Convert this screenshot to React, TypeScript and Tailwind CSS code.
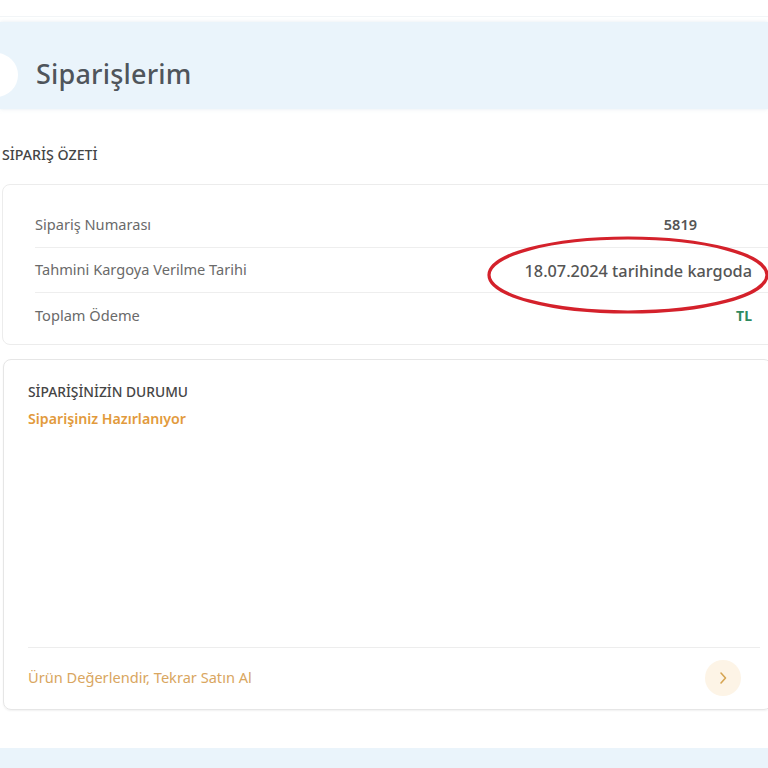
import React from "react";

const font = { fontFamily: '"Noto Sans", "Open Sans", Arial, sans-serif' };

function SummaryRow({
  label,
  value,
  valueClass,
  last,
}: {
  label: string;
  value: React.ReactNode;
  valueClass: string;
  last?: boolean;
}) {
  return (
    <div
      className={`flex h-[45px] items-center justify-between ${
        last ? "" : "border-b border-[#eeeeee]"
      }`}
    >
      <span className="text-[14.6px] text-[#6a6a6a]">{label}</span>
      <span className={valueClass}>{value}</span>
    </div>
  );
}

export default function App() {
  return (
    <div
      className="relative h-[768px] w-[768px] overflow-hidden bg-white"
      style={font}
    >
      {/* top hairline */}
      <div className="mt-[16px] h-px bg-[#f2f5f7]" />

      {/* page header */}
      <div className="mt-[5px] flex h-[87px] items-center bg-[#eaf4fb] pt-[18px] shadow-[0_0_4px_rgba(180,200,215,0.35)]">
        <div className="ml-[-26px] flex h-11 w-11 shrink-0 items-center justify-end rounded-full bg-white pr-[26px]">
          <svg width="8" height="10" viewBox="0 0 8 10" className="mr-[-6px]">
            <path
              d="M6 1 L2 5 L6 9"
              fill="none"
              stroke="#c9cfd4"
              strokeWidth="1.5"
              strokeLinecap="round"
            />
          </svg>
        </div>
        <h1 className="ml-[18px] text-[27px] font-medium tracking-[0.2px] text-[#4f555b]">
          Siparişlerim
        </h1>
      </div>

      {/* order summary */}
      <div className="ml-[2px] mt-[36px] text-[14.2px] font-medium leading-5 text-[#454545]">
        SİPARİŞ ÖZETİ
      </div>

      <div className="ml-[2px] mr-[-12px] mt-[19px] rounded-[8px] border border-[#ececec] pb-[6px] pl-[32px] pt-[18px]">
        <SummaryRow
          label="Sipariş Numarası"
          value="5819"
          valueClass="mr-[82px] text-[14.5px] font-semibold text-[#555555]"
        />
        <SummaryRow
          label="Tahmini Kargoya Verilme Tarihi"
          value="18.07.2024 tarihinde kargoda"
          valueClass="mr-[27px] mt-[3px] text-[16.3px] font-medium text-[#555555]"
        />
        <SummaryRow
          label="Toplam Ödeme"
          value="TL"
          valueClass="mr-[27px] text-[14px] font-bold text-[#2f8a5f]"
          last
        />
      </div>

      {/* order status */}
      <div className="ml-[3px] mr-[-4px] mt-[14px] flex h-[351px] flex-col rounded-[8px] border border-[#e6e6e6] pl-[24px] pr-[11px] shadow-[0_1px_2px_rgba(0,0,0,0.06)]">
        <div className="mt-[22px] text-[13.8px] font-medium leading-5 text-[#454545]">
          SİPARİŞİNİZİN DURUMU
        </div>
        <div className="mt-[7px] text-[14.2px] font-semibold leading-5 text-[#e29a3c]">
          Siparişiniz Hazırlanıyor
        </div>
        <div className="flex-1" />
        <div className="flex h-[62px] items-center justify-between border-t border-[#ededed] pb-[1px]">
          <span className="text-[14.6px] text-[#d9a660]">
            Ürün Değerlendir, Tekrar Satın Al
          </span>
          <div className="mr-[19px] flex h-9 w-9 items-center justify-center rounded-full bg-[#fdf4e6]">
            <svg width="10" height="14" viewBox="0 0 10 14">
              <path
                d="M3 2 L7.5 7 L3 12"
                fill="none"
                stroke="#d6a552"
                strokeWidth="1.6"
                strokeLinecap="round"
                strokeLinejoin="round"
              />
            </svg>
          </div>
        </div>
      </div>

      {/* bottom band */}
      <div className="mt-[38px] h-[40px] bg-[#eaf4fb]" />

      {/* hand-drawn highlight around the shipping date */}
      <svg
        className="pointer-events-none absolute left-[486px] top-[234px]"
        width="284"
        height="82"
        viewBox="0 0 284 82"
      >
        <ellipse
          cx="142"
          cy="41"
          rx="139"
          ry="37"
          fill="none"
          stroke="#d4212b"
          strokeWidth="3.2"
        />
      </svg>
    </div>
  );
}
